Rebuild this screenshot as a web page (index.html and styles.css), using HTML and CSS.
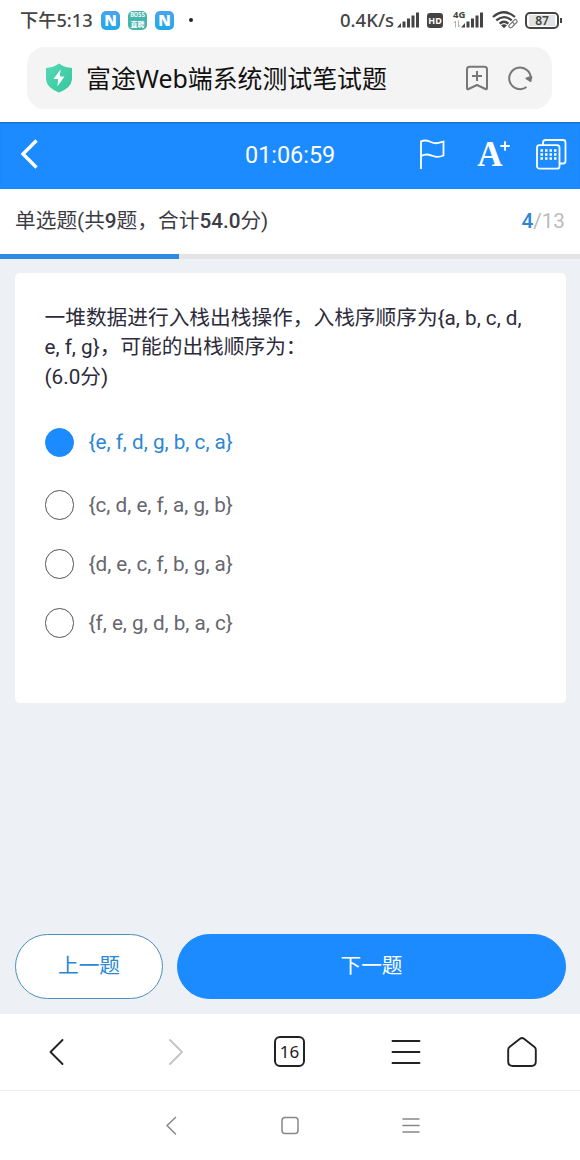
FILE: index.html
```
<!DOCTYPE html>

<html lang="zh-CN">
  <head>
    <meta charset="utf-8">
    <title>富途Web端系统测试笔试题</title>

    <link rel="stylesheet" href="styles.css">
  </head>
  <body>
    <div class="status-bar">
      <span class="clock">下午5:13</span>
      <span class="app app-n">N</span>
      <span class="app app-boss"><span>BOSS</span><span>直聘</span></span>
      <span class="app app-n">N</span>
      <span class="dot"></span>

      <span class="speed">0.4K/s</span>
      <svg class="signal" width="23" height="16" viewBox="0 0 23 16">
        <path d="M0 15.500L4 11v4.500zM5.500 9.500h3v6h-3zM10 6.500h3v9h-3zM14.500 3.500h3v12h-3zM19 .5h3v15h-3z"/>
      </svg>
      <span class="hd">HD</span>
      <span class="network">
        <span class="network-type">4G</span>
        <svg width="8" height="8" viewBox="0 0 8 8">
          <path d="M2.500 7.500V1L.8 3M5.500 .5V7l1.700-2" fill="none" stroke="#aaa" stroke-width=".9"/>
        </svg>
      </span>
      <svg class="signal signal-4g" width="23" height="16" viewBox="0 0 23 16">
        <path d="M0 15.500L4 11v4.500zM5.500 9.500h3v6h-3zM10 6.500h3v9h-3zM14.500 3.500h3v12h-3zM19 .5h3v15h-3z"/>
      </svg>
      <svg class="wifi" width="27" height="18" viewBox="0 0 27 18">
        <g fill="none" stroke="#444" stroke-width="2.300">
          <path d="M1 6Q12 -3.500 23 6"/>
          <path d="M4.300 9.400Q12 2.800 19.700 9.400"/>
          <path d="M7.600 12.600Q12 8.800 16.400 12.600"/>
        </g>
        <path d="M9 14.300q3-2.300 6 0L12 17.300z" fill="#444"/>
        <g fill="#fff" stroke="#777" stroke-width="1.200">
          <rect x="19.500" y="9.500" width="6" height="3.400" rx="1.700" transform="rotate(-45 22.500 11.200)"/>
          <rect x="16.500" y="12.500" width="6" height="3.400" rx="1.700" transform="rotate(-45 19.500 14.200)"/>
        </g>
      </svg>
      <span class="battery"><span class="battery-level">87</span></span>
      <span class="battery-tip"></span>
    </div>

    <div class="address-bar">
      <svg width="28" height="30" viewBox="0 0 28 30">
        <defs>
          <linearGradient id="shield" x1="0" y1="0" x2="1" y2="1">
            <stop offset="0" stop-color="#55d9b7"/>
            <stop offset="1" stop-color="#35c59c"/>
          </linearGradient>
        </defs>
        <path d="M14 .5Q19.500 4.500 27 5v11.500Q26 25 14 29.500 2 25 1 16.500V5Q8.500 4.500 14 .5z" fill="url(#shield)"/>
        <path d="M15.500 6.500L8.500 16h4.700l-.8 7.500 7.100-10h-4.700z" fill="#fff"/>
      </svg>
      <span class="address">富途Web端系统测试笔试题</span>
      <svg class="bookmark" width="24" height="26" viewBox="0 0 24 26">
        <path d="M2 4.500Q2 1.800 4.500 1.800h15q2.500 0 2.500 2.700v18.500q0 1.700-1.500 1L12 20l-8.500 4Q2 24.700 2 23zM12 6v10M7 11h10"/>
      </svg>
      <svg class="reload" width="26" height="26" viewBox="0 0 26 26">
        <path d="M19.500 22A10.800 10.800 0 1 1 23.800 14"/>
        <path d="M19.500 13.500l4 2.500 .8-4z" fill="#777"/>
      </svg>
    </div>

    <header class="exam-header">
      <svg class="back" width="20" height="32" viewBox="0 0 20 32">
        <path d="M18.500 2.500L5 16l13.500 13.500"/>
      </svg>
      <span class="timer">01:06:59</span>
      <svg class="flag" width="28" height="32" viewBox="0 0 28 32">
        <path d="M3 31V2.500M3 3.500C8 .5 11.500 4 15.500 5S22 4.500 25.500 3.500V17.500C22 19 19 19.500 15 18S8 15.500 3 18"/>
      </svg>
      <span class="font-size">
        A
        <svg width="10" height="10" viewBox="0 0 10 10"><path d="M5 .3v9.400M.3 5h9.400"/></svg>
      </span>
      <svg class="sheet" width="31" height="31" viewBox="0 0 31 31">
        <rect x="1" y="6.200" width="22.500" height="23.500" rx="2.500"/>
        <path d="M7 6V3.500Q7 1 9.500 1h17.500q2.500 0 2.500 2.500v18.500q0 2.500-2.500 2.500h-3.500"/>
        <path d="M4.500 11.500h16.500M4.500 15.500h16.500M4.500 19.500h16.500" stroke-width="2.500" stroke-dasharray="2.500 2"/>
      </svg>
    </header>

    <div class="section-title">
      <span>单选题(共<b>9</b>题，合计<b>54.0</b>分)</span>
      <span class="count"><b>4</b>/13</span>
    </div>
    <div class="progress"><div class="progress-done" style="width: 179px"></div></div>

    <main>
      <article class="question">
        <p>
          一堆数据进行入栈出栈操作，入栈序顺序为{a, b, c, d,<br>
          e, f, g}，可能的出栈顺序为：<br>
          (6.0分)
        </p>

        <ul class="options">
          <li class="option selected"><span class="radio"></span><span>{e, f, d, g, b, c, a}</span></li>
          <li class="option"><span class="radio"></span><span>{c, d, e, f, a, g, b}</span></li>
          <li class="option"><span class="radio"></span><span>{d, e, c, f, b, g, a}</span></li>
          <li class="option"><span class="radio"></span><span>{f, e, g, d, b, a, c}</span></li>
        </ul>
      </article>

      <div class="actions">
        <button class="prev">上一题</button>
        <button class="next">下一题</button>
      </div>
    </main>

    <nav class="browser-nav">
      <svg width="32" height="32" viewBox="0 0 32 32"><path d="M21.500 4L9.500 16l12 12"/></svg>
      <svg class="disabled" width="32" height="32" viewBox="0 0 32 32"><path d="M12 4l12 12-12 12"/></svg>
      <span class="tabs">16</span>
      <svg width="32" height="32" viewBox="0 0 32 32"><path d="M2.500 5h27M2.500 16h27M2.500 27h27"/></svg>
      <svg width="32" height="32" viewBox="0 0 32 32">
        <path d="M14 2.700q2-1.500 4 0L28.500 11q1.300 1 1.300 2.800V25.500q0 4.500-4.500 4.500H6.700q-4.500 0-4.500-4.500V13.800Q2.200 12 3.500 11z"/>
      </svg>
    </nav>

    <nav class="system-nav">
      <svg width="20" height="20" viewBox="0 0 20 20"><path d="M15.500 1.500L7 9.500l8.500 8.500"/></svg>
      <svg width="20" height="20" viewBox="0 0 20 20"><rect x="2" y="1.500" width="16" height="16" rx="3"/></svg>
      <svg width="20" height="20" viewBox="0 0 20 20"><path d="M3 3h16M3 9.500h16M3 16h16"/></svg>
    </nav>
  </body>
</html>
```

FILE: styles.css
```
* { box-sizing: border-box; }
body {
  margin: 0;
  width: 580px;
  height: 1160px;
  overflow: hidden;
  display: flex;
  flex-direction: column;
  background: white;
  font-family: Roboto, "Noto Sans CJK SC", sans-serif;
  font-size: 20.7px;
  color: #2d2b3c;
}
svg {
  display: block;
  flex: none;
}

/* phone status bar */
.status-bar {
  display: flex;
  align-items: center;
  height: 40px;
  padding-left: 20px;
  color: #444;
  font-family: "Noto Sans", "Noto Sans CJK SC", sans-serif;
  font-weight: 500;
  line-height: 1;
}
.clock {
  width: 72px;
  font-size: 18.2px;
  white-space: nowrap;
}
.app {
  display: flex;
  flex-direction: column;
  align-items: center;
  justify-content: center;
  width: 19px;
  height: 19px;
  margin-left: 9px;
  border-radius: 5px;
  color: white;
}
.app + .app { margin-left: 8px; }
.app-n {
  background: linear-gradient(#4ba3ee, #1ea9e6);
  font-size: 15px;
  font-weight: 900;
}
.app-boss {
  background: #46b5ab;
  font-family: "Noto Sans CJK SC", sans-serif;
  font-size: 7px;
  font-weight: bold;
  line-height: 10px;
}
.app-boss span:first-child {
  font-size: 5.5px;
  line-height: 8px;
}
.dot {
  width: 4px;
  height: 4px;
  margin-left: 15px;
  border-radius: 50%;
  background: #222;
}
.speed {
  width: 55px;
  margin-left: 147px;
  font-size: 18.5px;
  white-space: nowrap;
}
.signal {
  margin-left: 2px;
  fill: #444;
}
.hd {
  width: 16px;
  margin-left: 7px;
  border-radius: 3px;
  background: #444;
  color: white;
  font-size: 9px;
  font-weight: bold;
  line-height: 15px;
  text-align: center;
}
.network {
  display: flex;
  flex-direction: column;
  width: 8px;
  height: 20px;
  margin-left: 10px;
}
.network-type {
  font-size: 9.5px;
  font-weight: bold;
}
.signal-4g { margin-left: 0; }
.wifi { margin-left: 8px; }
.battery {
  width: 34px;
  height: 17px;
  margin-left: 6px;
  padding: 1px 2px;
  border: 2px solid #444;
  border-radius: 5px;
}
.battery-level {
  display: block;
  background: #e3e3e3;
  font-size: 12px;
  font-weight: 600;
  line-height: 11px;
  text-align: center;
}
.battery-tip {
  width: 2px;
  height: 5px;
  margin-left: 1px;
  background: #444;
}

/* browser address bar */
.address-bar {
  display: flex;
  align-items: center;
  height: 62px;
  margin: 7px 28px 13px 27px;
  padding: 0 19px 0 18px;
  border-radius: 18px;
  background: #f4f4f4;
}
.address {
  flex: 1;
  margin-left: 13px;
  padding-top: 1px;
  color: #111;
  font-family: "Noto Sans", "Noto Sans CJK SC", sans-serif;
  font-size: 24.9px;
  line-height: 1;
}
.bookmark,
.reload {
  fill: none;
  stroke: #777;
  stroke-width: 2;
  stroke-linejoin: round;
}
.reload { margin-left: 18px; }

.exam-header {
  display: flex;
  align-items: center;
  height: 67px;
  padding: 0 13px 3px 18px;
  background: #1b8bff;
  box-shadow: inset 0 2px 2px -1px rgba(0, 0, 0, 0.25);
  color: white;
}
.exam-header svg {
  fill: none;
  stroke: white;
  stroke-width: 1.8;
}
.exam-header .back { stroke-width: 3.4; }
.timer {
  width: 91px;
  margin-left: 207px;
  padding-top: 3px;
  font-size: 23.4px;
  line-height: 1;
}
.flag { margin-left: 83px; }
.font-size {
  display: flex;
  width: 32px;
  margin-left: 31px;
  font-family: "Liberation Serif", serif;
  font-size: 35px;
  font-weight: bold;
  line-height: 35px;
}
.font-size svg {
  margin: 4px 0 0 -3px;
}
.sheet { margin-left: 27px; }

.section-title {
  display: flex;
  justify-content: space-between;
  align-items: center;
  height: 65px;
  padding: 0 15px 5px;
  color: #3c3c46;
}
.section-title b { font-weight: 500; }
.section-title .count {
  padding-top: 4px;
  color: #bbb;
}
.count b { color: #2b87d3; }
.progress {
  height: 5px;
  background: #e4e4e6;
}
.progress-done {
  height: 100%;
  background: #2f8ae0;
}

main {
  display: flex;
  flex-direction: column;
  justify-content: space-between;
  height: 755px;
  padding: 14px 14px 15px 15px;
  background: #edf1f6;
}
.question {
  height: 430px;
  padding: 30.5px 29px 0 29.5px;
  border-radius: 5px;
  background: white;
}
.question p {
  margin: 0;
  line-height: 29.5px;
  white-space: nowrap;
}
.options {
  margin: 35.5px 0 0;
  padding: 0;
  list-style: none;
}
.option {
  display: flex;
  align-items: center;
  gap: 14.5px;
  height: 30px;
  margin-bottom: 29px;
  color: #66666e;
}
.option span:last-child { padding-bottom: 1px; }
.radio {
  width: 29.5px;
  height: 29.5px;
  border: 1px solid #555;
  border-radius: 50%;
}
.selected {
  margin-bottom: 32.5px;
  color: #2b87d3;
}
.selected .radio {
  border-color: #1b8bff;
  background: #1b8bff;
}
.actions {
  display: flex;
  gap: 14px;
}
button {
  height: 65px;
  padding: 0 0 5px;
  border: 1px solid #1b8bff;
  border-radius: 33px;
  font-family: inherit;
  font-size: inherit;
}
.prev {
  width: 148px;
  border-color: #4a90bd;
  background: white;
  color: #2b87d3;
}
.next {
  flex: 1;
  background: #1b8bff;
  color: white;
}

.browser-nav,
.system-nav {
  display: flex;
  align-items: center;
}
.browser-nav {
  justify-content: space-between;
  height: 77px;
  padding: 0 42px 1px 41px;
  border-bottom: 1px solid #eee;
}
.browser-nav svg,
.system-nav svg {
  fill: none;
  stroke: #222;
  stroke-width: 1.9;
  stroke-linecap: round;
  stroke-linejoin: round;
}
.browser-nav .disabled { stroke: #c4c4c4; }
.tabs {
  width: 31px;
  height: 31px;
  border: 2px solid #222;
  border-radius: 6px;
  color: #222;
  font-family: "Noto Sans", sans-serif;
  font-size: 17px;
  line-height: 28px;
  text-align: center;
}
.system-nav {
  justify-content: center;
  gap: 100px;
  height: 69px;
}
.system-nav svg {
  stroke: #888;
  stroke-width: 1.5;
}
```
